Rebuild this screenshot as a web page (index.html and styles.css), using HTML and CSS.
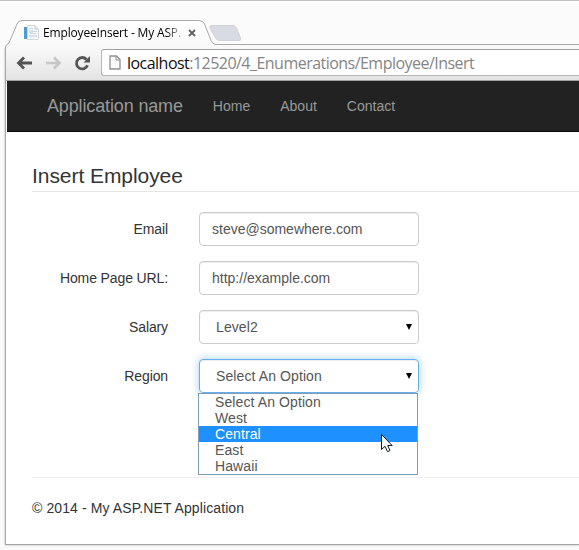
FILE: index.html
```html
<!DOCTYPE html>
<html lang="en">
<head>
<meta charset="utf-8">
<title>EmployeeInsert - My ASP.NET Application</title>
<link rel="stylesheet" href="styles.css">
</head>
<body>
<header class="tabstrip">
  <svg class="tabshape" width="579" height="28" viewBox="0 0 579 28">
    <defs>
      <linearGradient id="tab" x1="0" y1="0" x2="0" y2="1"><stop offset="0" stop-color="#fff"/><stop offset="1" stop-color="#f9f9f9"/></linearGradient>
    </defs>
    <path d="M5.500 28V27Q6 24.500 9 23L17 4Q18.500 .5 22 .5H199Q203 .5 204.500 4L211 20.500Q212.500 24.500 216 24.500H579V28Z" fill="url(#tab)"/>
    <path d="M5.500 28V27Q6 24.500 9 23L17 4Q18.500 .5 22 .5H199Q203 .5 204.500 4L211 20.500Q212.500 24.500 216 24.500H579" fill="none" stroke="#a9a9a9"/>
    <path d="M212 5.500H233Q235.500 5.500 236.500 8L240.500 18Q241.500 20.500 239 20.500H220Q217 20.500 215.500 18L210 8Q209 5.500 212 5.500Z" fill="#d8dce2" stroke="#d0d3d8"/>
  </svg>
  <div class="tab">
    <svg class="favicon" width="16" height="16" viewBox="0 0 16 16">
      <path d="M4.500.5H12L15.500 4V14.500H4.500Z" fill="#f5f7fa" stroke="#d3d7dd"/>
      <path d="M12 .5V4H15.500" fill="none" stroke="#c8cdd3"/>
      <path d="M1 2H4V14H1Z" fill="#4d9dcd"/><path d="M4 2H5V14H4Z" fill="#b9d9ea"/>
      <path d="M6 5H10V8H6ZM6 10H14V12H6Z" fill="#d5dfed"/>
      <path d="M6 3.500H10M7 8.500H13M9 6.500H14" stroke="#d0d7e0"/>
    </svg>
    <span class="tabtitle">EmployeeInsert - My ASP.</span>
    <svg class="close" width="8" height="8" viewBox="0 0 8 8"><path d="M1 1L7 7M7 1L1 7" stroke="#606060" stroke-width="1.800"/></svg>
  </div>
</header>
<div class="window">
  <div class="toolbar">
    <svg class="nav-icons" width="76" height="16" viewBox="0 0 76 16">
      <path d="M17 8H4M9 2.500L3.500 8L9 13.500" fill="none" stroke="#535353" stroke-width="2.800"/>
      <path d="M31 8H44M39 2.500L44.500 8L39 13.500" fill="none" stroke="#c7c7c7" stroke-width="2.600"/>
      <path d="M71.500 4.500A5.700 5.700 0 1 0 72.500 10.200" fill="none" stroke="#555" stroke-width="2.800"/>
      <path d="M75 1V7.500H68.500Z" fill="#555"/>
    </svg>
    <div class="omnibox">
      <svg class="doc" width="12" height="15" viewBox="0 0 12 15"><path d="M1 1H7.500L11 4.500V14H1Z" fill="#fafafa" stroke="#909090" stroke-width="1.300"/><path d="M7 1V5H11" fill="none" stroke="#909090"/></svg>
      <span class="url"><b>localhost</b>:12520/4_Enumerations/Employee/Insert</span>
    </div>
  </div>
  <nav class="navbar">
    <a class="brand">Application name</a>
    <a>Home</a>
    <a>About</a>
    <a>Contact</a>
  </nav>
  <main>
    <h1>Insert Employee</h1>
    <form>
      <div class="row"><label>Email</label><div class="control">steve@somewhere.com</div></div>
      <div class="row"><label>Home Page URL:</label><div class="control">http://example.com</div></div>
      <div class="row"><label>Salary</label><div class="control select">Level2<i class="arrow"></i></div></div>
      <div class="row"><label>Region</label><div class="control select focus">Select An Option<i class="arrow"></i>
        <ul class="menu">
          <li>Select An Option</li>
          <li>West</li>
          <li class="active">Central</li>
          <li>East</li>
          <li>Hawaii</li>
        </ul>
        <svg class="cursor" width="13" height="20" viewBox="0 0 13 20"><path d="M1.500 1.500V16.500L5 13.300L7.500 18.700L10 17.500L7.700 12.500H12.200Z" fill="#fff" stroke="#111a2b"/></svg>
      </div></div>
    </form>
    <footer>© 2014 - My ASP.NET Application</footer>
  </main>
</div>
</body>
</html>
```
FILE: styles.css
```css
* { box-sizing: border-box; }
body {
  margin: 0;
  height: 550px;
  overflow: hidden;
  background: #fbfbfb;
  border-top: 1px solid #c0c0c0;
  font: 14px/20px "Liberation Sans", Arial, sans-serif;
  color: #333;
}
.tabstrip {
  position: relative;
  height: 47px;
  padding-top: 19px;
}
.tabshape { position: absolute; left: 0; top: 19px; }
.tab {
  position: relative;
  display: flex;
  align-items: center;
  height: 25px;
  padding-left: 23px;
}
.tabtitle {
  width: 139px;
  margin-left: 4px;
  font: 12px/18px "Open Sans", sans-serif;
  letter-spacing: -0.16px;
  white-space: nowrap;
  background: linear-gradient(90deg, #000 123px, #ccc 139px);
  -webkit-background-clip: text;
  background-clip: text;
  color: transparent;
}
.close { margin-left: 6px; }
.window {
  height: 497px;
  margin-left: 5px;
  border-left: 1px solid #a9a9a9;
  border-bottom: 1px solid #a5a5a5;
  background: #fff;
  box-shadow: 0 0 2px #aaa;
  clip-path: inset(0 0 -3px -3px);
}
.toolbar {
  display: flex;
  align-items: center;
  height: 33px;
  padding: 0 0 0 9px;
  border-bottom: 1px solid #a0a0a0;
  background: linear-gradient(#f9f9f9, #e3e3e3);
}
.nav-icons { flex: none; margin-top: -3px; }
.omnibox {
  display: flex;
  align-items: center;
  flex: 1;
  height: 27px;
  margin: -3px 0 0 10px;
  padding-left: 7px;
  border: 1px solid #b6b6b6;
  border-top-color: #a0a0a0;
  border-right: 0;
  border-radius: 3px 0 0 3px;
  background: #fff;
}
.url {
  margin-left: 6px;
  font: 16px/24px "Open Sans", sans-serif;
  letter-spacing: -0.53px;
  color: #858585;
  white-space: nowrap;
}
.url b { font-weight: 400; color: #111; }
.navbar {
  display: flex;
  align-items: center;
  gap: 30px;
  height: 51px;
  margin-left: 1px;
  padding-left: 40px;
  border-bottom: 1px solid #080808;
  background: #222;
  color: #999;
}
.brand { font-size: 18px; letter-spacing: -0.14px; }
main { padding: 32px 0 0 26px; }
h1 {
  height: 28px;
  margin: 0 0 20px;
  border-bottom: 1px solid #e5e5e5;
  font-size: 21px;
  font-weight: 400;
  line-height: 24px;
  letter-spacing: -0.06px;
}
.row {
  display: flex;
  align-items: center;
  gap: 31px;
  height: 34px;
  margin-bottom: 15px;
}
label { width: 136px; text-align: right; letter-spacing: -0.12px; }
.control {
  position: relative;
  width: 220px;
  height: 34px;
  padding: 6px 12px;
  border: 1px solid #ccc;
  border-radius: 4px;
  box-shadow: inset 0 1px 1px rgba(0, 0, 0, .075);
  color: #555;
}
.select { padding-left: 16px; letter-spacing: 0.1px; }
.focus {
  border-color: #66afe9;
  box-shadow: inset 0 1px 1px rgba(0, 0, 0, .075), 0 0 8px rgba(102, 175, 233, .6);
}
.arrow {
  position: absolute;
  right: 6px;
  top: 13px;
  border: 3px solid transparent;
  border-top: 6px solid #000;
  border-bottom: 0;
}
.menu {
  position: absolute;
  left: -2px;
  top: 33px;
  width: 220px;
  margin: 0;
  padding: 0;
  border: 1px solid #7f9db9;
  background: #fff;
  list-style: none;
  line-height: 16px;
}
.menu li { height: 16px; padding-left: 16px; }
.menu .active { background: #1e90ff; color: #fff; }
.cursor { position: absolute; left: 180px; top: 73px; }
footer {
  margin-top: 84px;
  padding-top: 20px;
  border-top: 1px solid #eee;
  letter-spacing: 0.1px;
}
```
